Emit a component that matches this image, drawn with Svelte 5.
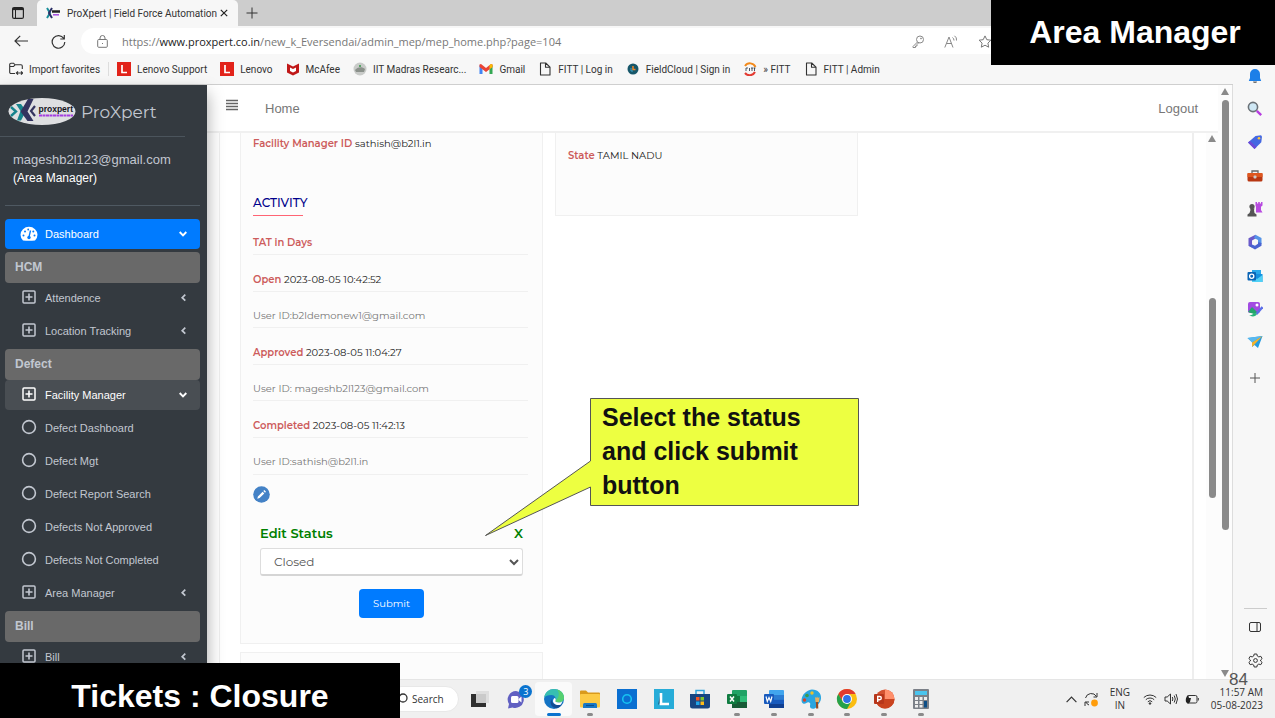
<script lang="ts">
	let status = $state('Closed');

	const favorites = [
		{ icon: 'import', label: 'Import favorites' },
		{ icon: 'lenovo', label: 'Lenovo Support' },
		{ icon: 'lenovo', label: 'Lenovo' },
		{ icon: 'mcafee', label: 'McAfee' },
		{ icon: 'globe', label: 'IIT Madras Researc...' },
		{ icon: 'gmail', label: 'Gmail' },
		{ icon: 'page', label: 'FITT | Log in' },
		{ icon: 'cloud', label: 'FieldCloud | Sign in' },
		{ icon: 'fitt', label: '» FITT' },
		{ icon: 'page', label: 'FITT | Admin' }
	];

	const menu = [
		{ type: 'active', icon: 'gauge', label: 'Dashboard', arrow: 'down' },
		{ type: 'header', label: 'HCM' },
		{ type: 'item', icon: 'plus', label: 'Attendence', arrow: 'left' },
		{ type: 'item', icon: 'plus', label: 'Location Tracking', arrow: 'left' },
		{ type: 'header', label: 'Defect' },
		{ type: 'open', icon: 'plus', label: 'Facility Manager', arrow: 'down' },
		{ type: 'item', icon: 'circle', label: 'Defect Dashboard' },
		{ type: 'item', icon: 'circle', label: 'Defect Mgt' },
		{ type: 'item', icon: 'circle', label: 'Defect Report Search' },
		{ type: 'item', icon: 'circle', label: 'Defects Not Approved' },
		{ type: 'item', icon: 'circle', label: 'Defects Not Completed' },
		{ type: 'item', icon: 'plus', label: 'Area Manager', arrow: 'left' },
		{ type: 'header', label: 'Bill' },
		{ type: 'item', icon: 'plus', label: 'Bill', arrow: 'left' }
	];

	const activity = [
		{ name: 'TAT in Days', value: '' },
		{ name: 'Open', value: '2023-08-05 10:42:52' },
		{ user: 'User ID:b2ldemonew1@gmail.com' },
		{ name: 'Approved', value: '2023-08-05 11:04:27' },
		{ user: 'User ID: mageshb2l123@gmail.com' },
		{ name: 'Completed', value: '2023-08-05 11:42:13' },
		{ user: 'User ID:sathish@b2l1.in' }
	];

	const railIcons = ['bell', 'search', 'tag', 'toolbox', 'games', 'office', 'outlook', 'designer', 'drop'];

	const apps = [
		{ icon: 'taskview', name: 'Task view' },
		{ icon: 'chat', name: 'Chat' },
		{ icon: 'edge', name: 'Edge', current: true },
		{ icon: 'explorer', name: 'File Explorer', running: true },
		{ icon: 'alexa', name: 'Alexa' },
		{ icon: 'vantage', name: 'Vantage' },
		{ icon: 'store', name: 'Store' },
		{ icon: 'excel', name: 'Excel', running: true },
		{ icon: 'word', name: 'Word', running: true },
		{ icon: 'paint', name: 'Paint', running: true },
		{ icon: 'chrome', name: 'Chrome', running: true },
		{ icon: 'ppt', name: 'PowerPoint', running: true },
		{ icon: 'calc', name: 'Calculator', running: true }
	];
</script>

{#snippet favIcon(name: string)}
	<svg width="14" height="14" viewBox="0 0 14 14" fill="none">
		{#if name === 'import'}
			<path d="M6 11.5H2A1.3 1.3 0 0 1 .7 10.200V2.500A1.300 1.300 0 0 1 2 1.200h2.600L6 2.800h6A1.300 1.300 0 0 1 13.300 4v3M.700 4.500H4.500L6 2.800M7.500 11h6M9 9.300 7.300 11 9 12.700M12 9.300l1.700 1.700L12 12.700" stroke="#333" stroke-width="1.100" />
		{:else if name === 'lenovo'}
			<rect width="14" height="14" fill="#e2231a" />
			<path d="M5 3v7.500h5" stroke="#fff" stroke-width="1.700" />
		{:else if name === 'mcafee'}
			<path d="M1 1.500 7 4.500l6-3V10.500L7 13.500 1 10.500z" fill="#c01818" />
			<path d="M4 5.500 7 7l3-1.500V9L7 10.500 4 9z" fill="#fff" />
		{:else if name === 'globe'}
			<circle cx="7" cy="7" r="6.500" fill="#c9cbc9" />
			<path d="M2 8c2-3 7-4 10-1l-1 3H3z" fill="#8b918b" /><path d="M6 3h2v2H6z" fill="#58a566" />
		{:else if name === 'gmail'}
			<path d="M.500 3v9h3V6z" fill="#4285f4" /><path d="M13.500 3v9h-3V6z" fill="#34a853" />
			<path d="M.500 2.500 2 2l5 4 5-4 1.500.500V5L7 10 .500 5z" fill="#ea4335" /><path d="M10.500 3.300 12 2l1.500.500V5l-3 2.300z" fill="#fbbc04" />
		{:else if name === 'page'}
			<path d="M2.500 1h5.200L12 5.200V13H2.500zM7.500 1v4.300H12" stroke="#333" stroke-width="1.100" stroke-linejoin="round" />
		{:else if name === 'cloud'}
			<circle cx="7" cy="7" r="5.500" fill="#17576a" />
			<path d="M7 4v3.500h2.500" stroke="#f0872a" stroke-width="1.500" /><path d="M5 6v3h2" stroke="#3aa4c9" />
		{:else}
			<path d="M2 4a6 6 0 0 1 10.500 1" stroke="#f28a1c" stroke-width="2" /><path d="M2 11a6 6 0 0 0 10-1" stroke="#e33b32" stroke-width="2" />
			<path d="M3 6v3M3 6h2M6.500 6v3M8 6h2M9 6v3M10.500 6h2M11.500 6v3" stroke="#345" stroke-width=".9" />
		{/if}
	</svg>
{/snippet}

{#snippet menuIcon(name: string)}
	<svg class="menu-icon" width="18" height="18" viewBox="0 0 18 18" fill="none" stroke="currentColor">
		{#if name === 'gauge'}
			<path d="M3 15.500A8.500 8 0 1 1 15 15.500Q9 16 3 15.500z" fill="currentColor" stroke="none" />
			<path d="m9 12 1.500-6.500" stroke="#007bff" stroke-width="1.300" />
			<g fill="#007bff" stroke="none"><circle cx="9" cy="12.500" r="1.700" /><circle cx="3.500" cy="10.500" r="1" /><circle cx="5" cy="6.500" r="1" /><circle cx="8.200" cy="4.500" r=".9" /><circle cx="13.300" cy="6.500" r="1" /><circle cx="14.500" cy="10.500" r="1" /></g>
		{:else if name === 'plus'}
			<rect x="3" y="2" width="12" height="12" rx="1" stroke-width="1.500" />
			<path d="M9 4.500v7M5.500 8h7" stroke-width="1.600" />
		{:else}
			<circle cx="9" cy="8" r="6.400" stroke-width="1.600" />
		{/if}
	</svg>
{/snippet}

{#snippet railIcon(name: string)}
	<svg width="16" height="16" viewBox="0 0 16 16" fill="none">
		{#if name === 'bell'}
			<path d="M8 1a5 5 0 0 0-5 5v4L1.800 13h12.400L13 10V6a5 5 0 0 0-5-5z" fill="#1c7fe8" /><path d="M6 13.500h4a2 1.500 0 0 1-4 0z" fill="#666" />
		{:else if name === 'search'}
			<circle cx="6" cy="6" r="4.600" fill="#cfe8f5" stroke="#6b7278" stroke-width="1.600" /><path d="m9.800 9.800 4.400 4.400" stroke="#b63de0" stroke-width="2.400" />
		{:else if name === 'tag'}
			<path d="M8.500 2 14 1.200l1 1.300-.700 5.700L7.500 15 1 8.500z" fill="#4468e2" /><path d="M1 8.500 3 7l6.500 6-2 2z" fill="#6d49d6" /><circle cx="12" cy="4.200" r="1.300" fill="#ffc83d" />
		{:else if name === 'toolbox'}
			<path d="M5 5V3h6v2" stroke="#666" stroke-width="1.300" /><rect x=".5" y="5" width="15" height="8.500" rx="1.500" fill="#b83712" /><path d="M.5 5h15v4H.5z" fill="#de571f" /><rect x="6.500" y="7.500" width="3" height="3" rx="1" fill="#ccc" />
		{:else if name === 'games'}
			<path d="M8.500 1H10v1.500h1.200V1h1.600v1.500H14V1h1.500v3.500L14 5.800V9l1.500 2.500H9V6L8.500 4.500z" fill="#b84be0" /><circle cx="5" cy="5.500" r="2.600" fill="#555" /><path d="M3 7.500h4.500L7 9l.5 3 2 1.500v2H.5v-2l2-1.500L3.500 9z" fill="#555" />
		{:else if name === 'office'}
			<path d="M8.500.8 1.500 4.300v7.400L5 13.500V6.500l5-2.700z" fill="#6b5ac9" /><path d="M8.500.8 14.500 4v6l-3.500-1.800V6L7 4z" fill="#5594e8" /><path d="M14.500 9v2.700L8 15.400 1.500 11.700l3.500-1.200 3 1.300 3-2V8z" fill="#4a63d0" /><circle cx="8" cy="8" r="2.300" fill="#f7f7f7" />
		{:else if name === 'outlook'}
			<path d="M5 2h9v5H5z" fill="#28a8ea" /><path d="M5 6h10.500v8H5z" fill="#1490df" /><path d="m5 8 5 3 5.500-4v7H5z" fill="#50d0f5" /><rect x=".5" y="4" width="8.500" height="8.500" rx="1" fill="#0a64b5" /><circle cx="4.700" cy="8.200" r="2.100" stroke="#fff" stroke-width="1.300" />
		{:else if name === 'designer'}
			<rect x="1" y="1" width="12" height="11" rx="2" fill="#a24be2" /><path d="m1 11 4-5 6 6-4 1z" fill="#25a66b" /><circle cx="10" cy="4" r="1.500" fill="#fff" /><path d="m15.500 6-6 7" stroke="#5c6ee8" stroke-width="2.400" /><path d="M8 12c-2 0-2 3-6 2 2 2 7 2 8-1z" fill="#29b37a" />
		{:else}
			<path d="M.5 4 15.500 2 11 14 7.500 11 5 13V8z" fill="#239be0" /><path d="m.5 4 15-2L5 8.500z" fill="#59b8ef" /><path d="M5 8.500 15.500 2 7 11l-2 2z" fill="#f5b32a" />
		{/if}
	</svg>
{/snippet}

{#snippet appIcon(name: string)}
	<svg width="22" height="22" viewBox="0 0 22 22" fill="none">
		{#if name === 'taskview'}
			<rect x="2" y="6" width="15" height="13" fill="#2f2f2f" /><rect x="7" y="3" width="13" height="12" fill="#dcdcdc" opacity=".9" />
		{:else if name === 'chat'}
			<path d="M10 3a8.500 8.500 0 1 1-3.500 16.500L2 20.500l1-4.500A8.500 8.500 0 0 1 10 3z" fill="#6160c2" /><rect x="5" y="8" width="7.500" height="7" rx="1.500" fill="#fff" /><path d="m12.500 11 3-2.500v6l-3-2.500z" fill="#fff" />
		{:else if name === 'edge'}
			<circle cx="11" cy="11" r="10" fill="#1474c4" /><path d="M1 10C2 4 6 1 11 1c6 0 10 4 10 8.500 0 3-2.500 5-5.500 5-2 0-3.500-.8-3-2 1-2-.5-5.500-4-5.500C5 7 2 8 1 10z" fill="#37bfb1" /><path d="M14 1.500c4 1 7 4.500 7 8 0 3-2.500 5-5.500 5-2 0-3.500-.8-3-2C16 10 17 5 14 1.500z" fill="#56d070" /><path d="M8.500 11c0 4 3.500 6.500 8 6l2.500-1a9 9 0 0 1-5 4.300C9 20 6 16 8.500 11z" fill="#124d94" /><path d="M12.500 12.500c-.8 1.300 1 2 3 2 1.500 0 3-.5 4-1.500l-1.500 3.500c-4 1.500-8-.5-8-3.500 0-1.500 1-3 2-3 .8 1 .9 1.800.5 2.500z" fill="#fff" />
		{:else if name === 'explorer'}
			<path d="M1 3.500q0-1 1-1h5l2 2h11q1 0 1 1V10H1z" fill="#d99a1c" /><rect x="1" y="6" width="20" height="13.500" rx="1" fill="#fcca45" /><path d="M4 20v-3.500q0-1.500 1.500-1.500h11q1.500 0 1.500 1.500V20z" fill="#1a79c7" /><path d="M7 17.500h8" stroke="#0d4f8d" stroke-width="1.200" />
		{:else if name === 'alexa'}
			<rect x="1" y="1" width="20" height="20" fill="#0a6fd1" /><circle cx="11" cy="11" r="4.300" stroke="#16c3f2" stroke-width="1.600" />
		{:else if name === 'vantage'}
			<rect x="1" y="1" width="20" height="20" fill="#27acd8" /><path d="M5 17 7.500 5v9.500z" fill="#145a82" /><path d="M8 5v11h8" stroke="#fff" stroke-width="2.600" />
		{:else if name === 'store'}
			<path d="M7 6V2.500h8V6" stroke="#2ea4dd" stroke-width="1.500" /><path d="M1 6h20v12q0 2.500-2.500 2.500h-15Q1 20.500 1 18z" fill="#174581" /><path d="M7 9h3.500v3.500H7z" fill="#f15424" /><path d="M11.500 9H15v3.500h-3.500z" fill="#80c22a" /><path d="M7 13.500h3.500V17H7z" fill="#20a6e8" /><path d="M11.500 13.500H15V17h-3.500z" fill="#fdbb18" />
		{:else if name === 'excel'}
			<rect x="6" y="2" width="15" height="18" rx="1" fill="#21a366" /><path d="M6 8h8v6H6z" fill="#107c41" /><path d="M14 8h7v6h-7z" fill="#2fbd78" /><path d="M6 14h15v6H6z" fill="#185c37" /><rect x="1" y="6" width="10" height="10" rx="1" fill="#107c41" /><path d="m4 8.500 4 5M8 8.500l-4 5" stroke="#fff" stroke-width="1.500" />
		{:else if name === 'word'}
			<rect x="6" y="2" width="15" height="18" rx="1" fill="#41a5ee" /><path d="M6 7h15v4.500H6z" fill="#2b7cd3" /><path d="M6 11.500h15V16H6z" fill="#185abd" /><path d="M6 16h15v4H6z" fill="#103f91" /><rect x="1" y="6" width="10" height="10" rx="1" fill="#185abd" /><path d="m3 8.500 1.300 5L6 9.500l1.700 4 1.300-5" stroke="#fff" stroke-width="1.200" />
		{:else if name === 'paint'}
			<path d="M12 1.500c6 0 9.500 4 9 9-.5 5-4 6-5 9-2 2-6 1.500-6-1s1-3-1-4-3 2-6 1c-3-2-1-9 3-11.500 2-1.500 4-2.500 6-2.500z" fill="#2aa5e0" /><circle cx="4.500" cy="12" r="1.700" fill="#d64228" /><circle cx="7" cy="7.500" r="1.800" fill="#3a9a4c" /><circle cx="12" cy="5" r="1.700" fill="#eac22b" /><path d="M15 9l1.300 1L17 8.500l1 1.500 1.500-1L19 14h-3.500z" fill="#e5b062" /><path d="m17 14 .2 6.500" stroke="#934c26" stroke-width="2.200" />
		{:else if name === 'chrome'}
			<circle cx="11" cy="11" r="10" fill="#fbbd12" /><path d="M2.300 6A10 10 0 0 1 19.700 6H11l-4.300 7.500z" fill="#e23a2e" /><path d="M2.300 6A10 10 0 0 0 11 21l4.300-7.500-8.600 0z" fill="#26a14b" /><circle cx="11" cy="11" r="5" fill="#fff" /><circle cx="11" cy="11" r="3.900" fill="#2f72e8" />
		{:else if name === 'ppt'}
			<circle cx="12" cy="11" r="9.500" fill="#d35230" /><path d="M12 1.500A9.500 9.500 0 0 1 21.500 11H12z" fill="#ff8f6b" /><path d="M2.500 11h19a9.500 9.500 0 0 1-19 0z" fill="#c9431f" /><rect x="1" y="6" width="10" height="10" rx="1" fill="#b7361a" /><path d="M4.700 14V8.500h2a1.500 1.500 0 0 1 0 3.200h-2" stroke="#fff" stroke-width="1.400" />
		{:else}
			<rect x="3" y="1" width="16" height="20" rx="1" fill="#7b8088" /><rect x="5" y="3" width="12" height="4" fill="#4ac4ee" /><path d="M5 9h3v3H5zM9.500 9h3v3h-3zM14 9h3v3h-3zM5 13h3v3H5zM9.500 13h3v3h-3zM5 17h3v2.500H5zM9.500 17h3v2.500h-3z" fill="#eee" /><path d="M14 13h3v6.500h-3z" fill="#0d4e86" />
		{/if}
	</svg>
{/snippet}

<div class="desktop">
	<header class="tab-strip">
		<button class="plain tab-actions" aria-label="Tab actions">
			<svg width="12" height="12" viewBox="0 0 12 12" fill="none" stroke="#222"><rect x=".6" y=".6" width="10.800" height="10.800" rx="1.500" stroke-width="1.200" /><path d="M.6 2h10.800" stroke-width="2.200" /><path d="M3.500 3v8" /></svg>
		</button>
		<div class="tab">
			<svg width="14" height="12" viewBox="0 0 14 12" fill="none"><path d="m1 1 3 5-3 5" stroke="#1b8f9b" stroke-width="2" /><path d="M6 1 3 6l3 5" stroke="#2b2f66" stroke-width="2" /><path d="M6 4.500h8" stroke="#222" stroke-width="2.500" /><path d="M7 7.800h6" stroke="#a44be0" stroke-width="1.500" /></svg>
			<span class="tab-title">ProXpert | Field Force Automation</span>
			<button class="plain" aria-label="Close tab">
				<svg width="8" height="8" viewBox="0 0 8 8" stroke="#222" stroke-width="1.200"><path d="m.8.8 6.400 6.400M7.200.8.8 7.200" /></svg>
			</button>
		</div>
		<button class="plain new-tab" aria-label="New tab">
			<svg width="12" height="12" viewBox="0 0 12 12" stroke="#333"><path d="M6 .5v11M.5 6h11" /></svg>
		</button>
	</header>

	<div class="toolbar">
		<button class="plain" aria-label="Back">
			<svg width="14" height="12" viewBox="0 0 14 12" fill="none" stroke="#333" stroke-width="1.200"><path d="M6.200.8 1 6l5.200 5.200M1 6h13" /></svg>
		</button>
		<button class="plain" aria-label="Refresh">
			<svg width="15" height="15" viewBox="0 0 15 15" fill="none" stroke="#333" stroke-width="1.200"><path d="M12.800 4.500A6.300 6.300 0 1 0 13.800 8M13.300 1v4H9.300" /></svg>
		</button>
		<div class="address">
			<svg width="11" height="13" viewBox="0 0 11 13" fill="none" stroke="#777"><rect x=".7" y="4.500" width="9.600" height="7.800" rx="1" /><path d="M3 4.500V3a2.500 2.500 0 0 1 5 0v1.500M5.500 8v1" /></svg>
			<span class="url">https://<b>www.proxpert.co.in</b>/new_k_Eversendai/admin_mep/mep_home.php?page=104</span>
			<div class="address-icons">
				<svg width="12" height="13" viewBox="0 0 12 13" fill="none" stroke="#888"><circle cx="8" cy="4.500" r="3.500" /><path d="M5.500 7 1 11.500V12.500H3.500V11H5V9.500L6.700 7.800" /><circle cx="9" cy="3.500" r=".5" /></svg>
				<svg width="14" height="13" viewBox="0 0 14 13" fill="none" stroke="#888"><path d="M.8 12.500 5 2l4 10.500M2.500 8.500h5.200M8.500 2.500q1.500 1 1.500 3M10.500.8Q13 2.500 12.500 5.500" /></svg>
				<svg width="14" height="13" viewBox="0 0 14 13" fill="none" stroke="#777"><path d="m7 .9 1.800 3.800 4.100.5-3 2.900.8 4.100L7 10.200 3.300 12.200l.8-4.100-3-2.900 4.100-.5z" /></svg>
			</div>
		</div>
	</div>

	<div class="window">
		<div class="window-main">
			<nav class="favorites">
				{#each favorites as fav, i}
					<a href="#fav" class:first={i === 0}>{@render favIcon(fav.icon)}{fav.label}</a>
				{/each}
			</nav>

			<div class="viewport">
				<aside class="sidebar">
					<a class="brand" href="#home">
						<svg width="68" height="30" viewBox="0 0 68 30">
							<ellipse cx="34" cy="14.500" rx="33.500" ry="13.500" fill="#dedfe1" />
							<path d="m3 10 5 4.500L3 19" fill="none" stroke="#16838c" stroke-width="2.400" />
							<path d="M8 7h5l5 7-5 9.500H9L12.500 14z" fill="#16838c" />
							<path d="M20 2h5.500l-6 12.500 6 9.500-6 0-7-9.500z" fill="#33335f" /><path d="m27 9-4 5 4 5" fill="none" stroke="#33335f" stroke-width="2.200" />
							<text x="30.500" y="15" font-family="Liberation Sans, Arial, sans-serif" font-size="8.500" font-weight="700" fill="#15151f">proxpert</text>
							<path d="M31 18.500h34" stroke="#a43fe0" stroke-width="2" stroke-dasharray="3 .5" />
						</svg>
						<span>ProXpert</span>
					</a>
					<div class="user">
						<a href="#profile">mageshb2l123@gmail.com</a>
						<span>(Area Manager)</span>
					</div>
					<ul class="menu">
						{#each menu as entry}
							{#if entry.type === 'header'}
								<li class="menu-header">{entry.label}</li>
							{:else}
								<li class="menu-item {entry.type}">
									<a href="#menu">
										{@render menuIcon(entry.icon ?? '')}
										<span>{entry.label}</span>
										{#if entry.arrow === 'down'}
											<svg width="10" height="10" viewBox="0 0 10 10" fill="none" stroke="currentColor" stroke-width="1.900"><path d="m1.700 3 3.300 3.300L8.300 3" /></svg>
										{:else if entry.arrow}
											<svg width="10" height="10" viewBox="0 0 10 10" fill="none" stroke="currentColor" stroke-width="1.700"><path d="M7.300 1.700 4.200 4.700l3.100 3" /></svg>
										{/if}
									</a>
								</li>
							{/if}
						{/each}
					</ul>
				</aside>

				<div class="page">
					<nav class="navbar">
						<button class="plain" aria-label="Toggle menu">
							<svg width="12" height="12" viewBox="0 0 12 12" stroke="#666" stroke-width="1.400"><path d="M0 1.500h12M0 4.500h12M0 7.500h12M0 10.500h12" /></svg>
						</button>
						<a href="#home">Home</a>
						<a class="logout" href="#logout">Logout</a>
					</nav>
					<div class="page-body">
						<main class="content">
							<div class="column">
								<section class="card first-card">
									<p class="field"><b>Facility Manager ID</b> sathish@b2l1.in</p>
									<h2>ACTIVITY</h2>
									<ul class="activity">
										{#each activity as row}
											{#if row.user}
												<li class="by">{row.user}</li>
											{:else}
												<li><b>{row.name}</b> {row.value}</li>
											{/if}
										{/each}
									</ul>
									<button class="plain edit" aria-label="Edit">
										<svg width="17" height="17" viewBox="0 0 17 17"><circle cx="8.500" cy="8.500" r="8.300" fill="#4482c6" /><path d="m4.300 12.700.6-2.300 4.700-4.700 1.700 1.700L6.600 12.100zM10.300 5l1-1 1.700 1.700-1 1z" fill="#fff" /></svg>
									</button>
									<form class="status-form" onsubmit={(e) => e.preventDefault()}>
										<div class="form-head">
											<label for="status">Edit Status</label>
											<button type="button" class="plain" aria-label="Close">X</button>
										</div>
										<select id="status" bind:value={status}>
											<option>Closed</option>
											<option>Reopened</option>
										</select>
										<button class="submit" type="submit">Submit</button>
									</form>
								</section>
								<section class="card next-card"></section>
							</div>
							<div class="column">
								<section class="card state-card">
									<p class="field"><b>State</b> TAMIL NADU</p>
								</section>
							</div>
						</main>
						<div class="scrollbar inner">
							<i class="arrow"></i>
							<i class="before"></i>
							<i class="thumb"></i>
							<i class="after"></i>
						</div>
					</div>
				</div>

				<div class="scrollbar outer">
					<i class="arrow"></i>
					<i class="thumb"></i>
					<i class="after"></i>
					<i class="arrow down"></i>
				</div>
			</div>
		</div>

		<aside class="rail">
			<div class="rail-tools">
				{#each railIcons as name}
					<button class="plain" aria-label={name}>{@render railIcon(name)}</button>
				{/each}
			</div>
			<button class="plain rail-add" aria-label="Customize">
				<svg width="16" height="16" viewBox="0 0 16 16" stroke="#555"><path d="M8 3v10M3 8h10" /></svg>
			</button>
			<div class="rail-foot">
				<button class="plain" aria-label="Hide sidebar">
					<svg width="12" height="10" viewBox="0 0 12 10" fill="none" stroke="#333"><rect x=".5" y=".5" width="11" height="9" rx="1.500" /><path d="M8 .5v9" /></svg>
				</button>
				<button class="plain" aria-label="Settings">
					<svg width="15" height="15" viewBox="0 0 15 15" fill="none" stroke="#333"><circle cx="7.500" cy="7.500" r="1.900" /><path d="M6.200 1h2.600l.5 2 1.500.9 2-.6 1.300 2.300L12.600 7v1l1.500 1.400-1.300 2.300-2-.6-1.500.9-.5 2H6.200l-.5-2-1.500-.9-2 .6L.9 9.400 2.400 8V7L.9 5.600l1.300-2.300 2 .6L5.700 3z" stroke-linejoin="round" /></svg>
				</button>
			</div>
		</aside>
	</div>

	<footer class="taskbar">
		<button class="search-pill">
			<svg width="12" height="12" viewBox="0 0 12 12" fill="none" stroke="#333" stroke-width="1.300"><circle cx="7" cy="5" r="4" /><path d="M4 8 1 11" /></svg>
			Search
		</button>
		<div class="apps">
			{#each apps as app}
				<button class="plain app" class:current={app.current} class:running={app.running} aria-label={app.name}>
					{@render appIcon(app.icon)}
					{#if app.icon === 'chat'}<span class="count">3</span>{/if}
				</button>
			{/each}
		</div>
		<div class="tray">
			<svg width="11" height="7" viewBox="0 0 11 7" fill="none" stroke="#333" stroke-width="1.200"><path d="M.6 6.200 5.500 1.200l4.900 5" /></svg>
			<svg width="15" height="15" viewBox="0 0 15 15" fill="none" stroke="#333"><path d="M1.500 6A6 6 0 0 1 12.500 4.500M13 1v4H9.500M5 13A6 6 0 0 1 1.800 10M1 14v-4h4" /><circle cx="10.500" cy="11" r="3.400" fill="#ff9d0c" stroke="none" /></svg>
			<span class="lang">ENG<br />IN</span>
			<svg width="14" height="12" viewBox="0 0 14 12" fill="none" stroke="#333"><path d="M.8 4.500a9 9 0 0 1 12.400 0M2.800 6.700a6 6 0 0 1 8.400 0M4.800 8.800a3 3 0 0 1 4.400 0" /><circle cx="7" cy="10.500" r=".8" fill="#333" /></svg>
			<svg width="14" height="12" viewBox="0 0 14 12" fill="none" stroke="#333"><path d="M1 4h2.200L6.500 1v10L3.200 8H1zM8.300 4q1.200 2 0 4M10.200 2.500q2.200 3.500 0 7M12 1q3 5 0 10" /></svg>
			<svg width="14" height="11" viewBox="0 0 14 11" fill="none" stroke="#333"><rect x="2.500" y="1.500" width="9.500" height="7.500" rx="1.500" /><path d="M13.300 4v2.500" /><path d="M3 1q-3 3-2 7l2 2 2-2 1-4H4z" fill="#222" stroke="none" /></svg>
			<span class="clock">11:57 AM<br />05-08-2023</span>
		</div>
	</footer>

	<div class="banner role">Area Manager</div>
	<div class="banner title">Tickets : Closure</div>
	<div class="slide-number">84</div>
	<div class="callout">
		<svg width="374" height="138" viewBox="0 0 374 138"><path d="M105.500.5H373.500V107.500H105.500V89L.5 137.500 105.500 63z" fill="#edff41" stroke="#555" /></svg>
		<p>Select the status and click submit button</p>
	</div>
</div>

<style>
	:global(body) {
		margin: 0;
		overflow: hidden;
	}

	.desktop {
		position: relative;
		display: flex;
		flex-direction: column;
		height: 100vh;
		background: #fff;
		color: #333;
		font-family: 'Segoe UI', 'Open Sans', sans-serif;
		font-size: 10px;
	}

	.desktop :global(*) {
		box-sizing: border-box;
	}

	svg {
		display: block;
		flex: none;
	}

	a {
		color: inherit;
		text-decoration: none;
	}

	ul {
		list-style: none;
		margin: 0;
		padding: 0;
	}

	.plain {
		display: flex;
		align-items: center;
		justify-content: center;
		padding: 0;
		border: 0;
		background: none;
		color: inherit;
		font: inherit;
		cursor: pointer;
	}

	/* browser chrome */
	.tab-strip,
	.favorites {
		font-family: 'Segoe UI', Roboto, sans-serif;
	}

	.tab-strip {
		display: flex;
		flex: none;
		align-items: center;
		height: 26px;
		padding-left: 12px;
		background: #cdcdcd;
	}

	.tab {
		display: flex;
		align-items: center;
		gap: 7px;
		width: 201px;
		height: 26px;
		margin-left: 13px;
		padding: 0 10px 0 9px;
		border-radius: 5px 5px 0 0;
		background: #f7f7f7;
	}

	.tab-title {
		flex: 1;
		white-space: nowrap;
	}

	.tab .plain {
		margin-left: -4px;
	}

	.new-tab {
		margin-left: 8px;
	}

	.toolbar {
		display: flex;
		flex: none;
		align-items: center;
		gap: 16px;
		height: 30px;
		padding: 2px 0 2px 14px;
		background: #f7f7f7;
	}

	.toolbar .plain {
		width: 14px;
	}

	.toolbar .plain + .plain {
		margin-left: 7px;
	}

	.address {
		display: flex;
		flex: 1;
		align-items: center;
		height: 26px;
		margin-right: 283px;
		padding-left: 16px;
		border-radius: 13px 0 0 13px;
		background: #fff;
	}

	.url {
		flex: 1;
		margin-left: 14px;
		color: #777;
		font-size: 11px;
	}

	.url b {
		color: #222;
		font-weight: 400;
	}

	.address-icons {
		display: flex;
		gap: 20px;
	}

	.window {
		display: flex;
		flex: 1;
		min-height: 0;
	}

	.window-main {
		display: flex;
		flex: 1;
		flex-direction: column;
		min-width: 0;
	}

	.favorites {
		display: flex;
		flex: none;
		align-items: center;
		gap: 13px;
		height: 29px;
		padding: 0 0 2px 9px;
		border-bottom: 1px solid #cfcfcf;
		background: #f7f7f7;
		white-space: nowrap;
	}

	.favorites a {
		display: flex;
		align-items: center;
		gap: 6px;
	}

	.favorites .first {
		padding-right: 8px;
		border-right: 1px solid #ddd;
		margin-right: -5px;
	}

	.viewport {
		display: flex;
		flex: 1;
		min-height: 0;
	}

	/* application sidebar */
	.sidebar {
		z-index: 1;
		flex: none;
		width: 207px;
		overflow: hidden;
		background: #343a40;
		box-shadow: 0 8px 16px rgba(0, 0, 0, 0.35);
		color: #c2c7d0;
		font-family: 'Liberation Sans', Arial, sans-serif;
		font-size: 11px;
	}

	.brand {
		display: flex;
		align-items: center;
		gap: 5px;
		width: 185px;
		height: 52px;
		padding: 2px 0 0 8px;
		border-bottom: 1px solid #4b545c;
		font-family: Montserrat, Inter, sans-serif;
		font-size: 17px;
	}

	.user {
		display: flex;
		flex-direction: column;
		height: 69px;
		margin: 0 7px 13px 5px;
		padding: 14px 0 0 8px;
		border-bottom: 1px solid #4f5962;
		font-size: 13px;
		line-height: 18px;
	}

	.user span {
		color: #fff;
		font-size: 12px;
	}

	.menu {
		padding: 0 7px 0 5px;
	}

	.menu-header {
		height: 31px;
		padding-left: 10px;
		border-radius: 4px;
		background: #696969;
		font-size: 12px;
		font-weight: 700;
		line-height: 31px;
	}

	.menu-item {
		margin-bottom: 3px;
		border-radius: 4px;
	}

	.menu-item a {
		display: flex;
		align-items: center;
		height: 30px;
		padding: 0 12px 0 15px;
	}

	.menu-item span {
		flex: 1;
		margin-left: 7px;
	}

	.active {
		background: #007bff;
		color: #fff;
	}

	.open {
		background: #494e53;
		color: #fff;
	}

	/* page */
	.page {
		display: flex;
		flex: 1;
		flex-direction: column;
		min-width: 0;
	}

	.navbar {
		display: flex;
		flex: none;
		align-items: center;
		gap: 27px;
		height: 48px;
		padding: 0 20px 0 19px;
		border-bottom: 2px solid #f0f0f0;
		color: #777;
		font-family: 'Liberation Sans', Arial, sans-serif;
		font-size: 13px;
	}

	.navbar .plain {
		height: 18px;
		margin-bottom: 6px;
	}

	.logout {
		margin-left: auto;
	}

	.page-body {
		display: flex;
		flex: 1;
		min-height: 0;
	}

	.content {
		display: flex;
		flex: 1;
		gap: 12px;
		margin: 0 12px;
		padding-left: 20px;
		border: solid #eee;
		border-width: 0 2px 0 1px;
		overflow: hidden;
		font-family: Montserrat, Inter, sans-serif;
		font-size: 10px;
	}

	.column {
		display: flex;
		flex-direction: column;
		gap: 8px;
		width: 303px;
	}

	.card {
		flex: none;
		border: 1px solid #f0f0f0;
		background: #fcfcfc;
	}

	.card b {
		color: #cd5c5c;
		font-weight: 600;
	}

	.first-card {
		padding: 0 14px 25px 12px;
		border-top: 0;
	}

	.next-card {
		height: 80px;
	}

	.state-card {
		height: 83px;
		padding: 12px;
		border-top: 0;
	}

	.field {
		margin: 0;
		color: #222;
		line-height: 21px;
	}

	h2 {
		margin: 40px 0 0;
		color: #00008b;
		font-size: 12px;
		font-weight: 500;
		line-height: 18px;
	}

	h2::after {
		display: block;
		width: 50px;
		height: 1px;
		margin-top: 3px;
		background: #ff6474;
		content: '';
	}

	.activity {
		margin-top: 2px;
	}

	.activity li {
		height: 37px;
		padding-top: 15px;
		border-bottom: 1px solid #f0f0f0;
		color: #222;
		line-height: 20px;
	}

	.activity .by {
		height: 36px;
		padding-top: 14px;
		color: #777;
	}

	.activity .by:last-child {
		height: 37px;
	}

	.edit {
		margin-top: 11px;
	}

	.status-form {
		display: flex;
		flex-direction: column;
		margin: 20px 5px 0 7px;
	}

	.form-head {
		display: flex;
		justify-content: space-between;
		color: #008000;
		font-size: 13px;
		font-weight: 600;
		line-height: 20px;
	}

	select {
		height: 28px;
		margin-top: 5px;
		padding: 0 0 0 9px;
		border: 1px solid #ddd;
		border-bottom: 2px solid #d5d5d5;
		border-radius: 3px;
		background: #fff;
		color: #555;
		font: inherit;
		font-size: 12px;
	}

	.submit {
		align-self: center;
		width: 65px;
		height: 29px;
		margin-top: 13px;
		border: 0;
		border-radius: 4px;
		background: #007bff;
		color: #fff;
		font: inherit;
	}

	.scrollbar {
		display: flex;
		flex: none;
		flex-direction: column;
		align-items: center;
		width: 12px;
		background: #fcfcfc;
	}

	.outer {
		width: 15px;
		padding: 3px 0 2px;
		border-right: 1px solid #ddd;
	}

	.inner {
		padding-top: 2px;
	}

	.arrow {
		width: 0;
		height: 7px;
		border: solid transparent;
		border-width: 0 4px 7px;
		border-bottom-color: #8a8a8a;
	}

	.down {
		border-width: 7px 4px 0;
		border-top-color: #8a8a8a;
	}

	.thumb {
		width: 7px;
		border-radius: 4px;
		background: #8a8a8a;
	}

	.outer .thumb {
		flex: 43;
		margin-top: 5px;
	}

	.outer .after {
		flex: 14;
	}

	.inner .before {
		flex: 31;
	}

	.inner .thumb {
		flex: 40;
	}

	.inner .after {
		flex: 36;
	}

	.rail {
		display: flex;
		flex: none;
		flex-direction: column;
		align-items: center;
		width: 42px;
		padding: 3px 0 0 2px;
		background: #f7f7f7;
	}

	.rail-tools {
		display: grid;
		grid-auto-rows: 1fr;
		height: 300px;
	}

	.rail-add {
		height: 38px;
	}

	.rail-foot {
		display: flex;
		flex-direction: column;
		align-items: center;
		gap: 21px;
		width: 23px;
		margin-top: auto;
		padding: 13px 0 11px;
		border-top: 1px solid #ccc;
	}

	/* windows taskbar */
	.taskbar {
		display: flex;
		flex: none;
		align-items: center;
		height: 39px;
		padding: 0 12px 0 388px;
		border-top: 1px solid #e5e5e5;
		background: #f0f0f0;
	}

	.search-pill {
		display: flex;
		align-items: center;
		gap: 4px;
		width: 71px;
		height: 26px;
		padding: 0 0 0 7px;
		border: 1px solid #e8e8e8;
		border-radius: 13px;
		background: #fff;
		color: #333;
		font: inherit;
	}

	.apps {
		display: grid;
		grid-template-columns: repeat(13, 1fr);
		width: 477px;
		margin-left: 3px;
	}

	.app {
		position: relative;
		height: 34px;
	}

	.current {
		border-radius: 4px;
		background: #fafafa;
	}

	.running::after,
	.current::after {
		position: absolute;
		bottom: 0;
		width: 6px;
		height: 3px;
		border-radius: 2px;
		background: #8a8a8a;
		content: '';
	}

	.current::after {
		width: 14px;
		background: #0a73cf;
	}

	.count {
		position: absolute;
		top: 3px;
		right: 3px;
		width: 13px;
		height: 13px;
		border-radius: 50%;
		background: #0a73cf;
		color: #fff;
		font-size: 9px;
		line-height: 13px;
	}

	.tray {
		display: flex;
		align-items: center;
		gap: 7px;
		margin-left: auto;
		line-height: 13px;
	}

	.lang {
		width: 28px;
		margin-right: 2px;
		text-align: center;
	}

	.clock {
		margin-left: 5px;
		text-align: right;
	}

	/* presentation overlays */
	.banner {
		position: absolute;
		z-index: 3;
		background: #000;
		color: #fff;
		font-family: 'Liberation Sans', Arial, sans-serif;
		font-size: 32px;
		font-weight: 700;
		text-align: center;
	}

	.role {
		top: 0;
		right: 0;
		width: 284px;
		padding-left: 4px;
		height: 65px;
		line-height: 64px;
	}

	.title {
		bottom: 0;
		left: 0;
		width: 400px;
		height: 55px;
		line-height: 66px;
	}

	.slide-number {
		position: absolute;
		right: 27px;
		bottom: 30px;
		color: #555;
		font-family: 'Liberation Sans', Arial, sans-serif;
		font-size: 17px;
		line-height: 17px;
	}

	.callout {
		position: absolute;
		z-index: 2;
		top: 398px;
		left: 485px;
		color: #111;
		font-family: 'Liberation Sans', Arial, sans-serif;
		font-size: 25px;
		font-weight: 700;
		line-height: 34px;
	}

	.callout p {
		position: absolute;
		top: 2px;
		left: 117px;
		width: 220px;
		margin: 0;
	}
</style>
